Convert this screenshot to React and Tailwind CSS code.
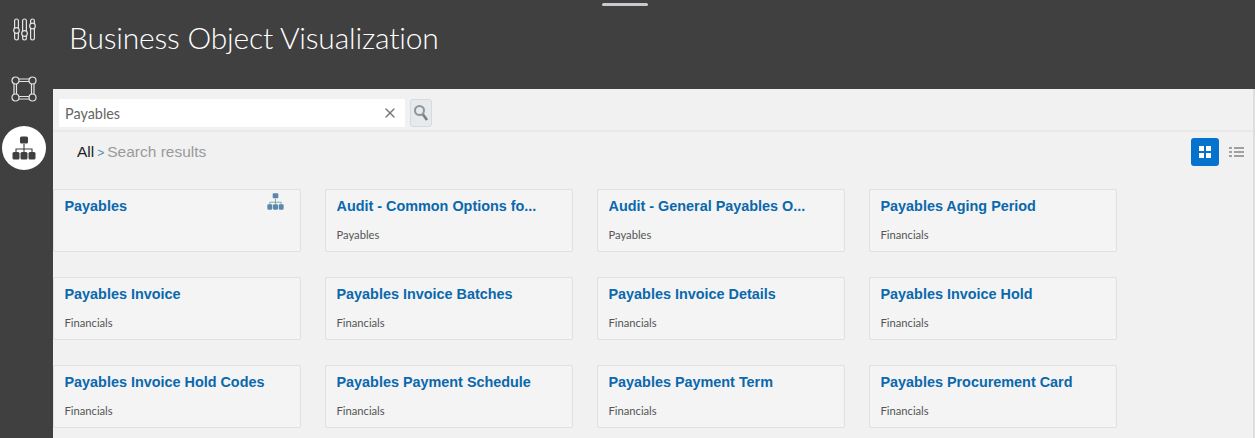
import { X } from 'lucide-react';

const cards = [
    { title: 'Payables', sub: '', tree: true },
    { title: 'Audit - Common Options fo...', sub: 'Payables' },
    { title: 'Audit - General Payables O...', sub: 'Payables' },
    { title: 'Payables Aging Period', sub: 'Financials' },
    { title: 'Payables Invoice', sub: 'Financials' },
    { title: 'Payables Invoice Batches', sub: 'Financials' },
    { title: 'Payables Invoice Details', sub: 'Financials' },
    { title: 'Payables Invoice Hold', sub: 'Financials' },
    { title: 'Payables Invoice Hold Codes', sub: 'Financials' },
    { title: 'Payables Payment Schedule', sub: 'Financials' },
    { title: 'Payables Payment Term', sub: 'Financials' },
    { title: 'Payables Procurement Card', sub: 'Financials' },
];

const SlidersIcon = () => (
    <svg width="23" height="23" viewBox="0 0 23 23" fill="none" stroke="#e4e4e4" strokeWidth="1.200">
        <rect x="1.600" y="1" width="3.800" height="21" rx="1.900" />
        <rect x="9.600" y="1" width="3.800" height="21" rx="1.900" />
        <rect x="17.600" y="1" width="3.800" height="21" rx="1.900" />
        <circle cx="3.500" cy="12.500" r="2.800" fill="#404040" />
        <circle cx="11.500" cy="15.500" r="2.800" fill="#404040" />
        <circle cx="19.500" cy="8" r="2.800" fill="#404040" />
    </svg>
);

const GraphIcon = () => (
    <svg width="26" height="26" viewBox="0 0 26 26" fill="none" stroke="#e4e4e4" strokeWidth="1.200">
        <path d="M7.500 3h11M7.500 5.500h11M7.500 20.500h11M7.500 23h11M3 7.500v11M5.500 7.500v11M20.500 7.500v11M23 7.500v11" />
        <circle cx="4.500" cy="4.500" r="3.500" fill="#404040" />
        <circle cx="21.500" cy="4.500" r="3.500" fill="#404040" />
        <circle cx="4.500" cy="21.500" r="3.500" fill="#404040" />
        <circle cx="21.500" cy="21.500" r="3.500" fill="#404040" />
    </svg>
);

const TreeIcon = ({ size, box, line }) => (
    <svg width={size} height={size} viewBox="0 0 24 24">
        <path d="M12 8v8M4 16v-3h16v3" fill="none" stroke={line} strokeWidth="1.100" />
        <rect x="8" y="0.500" width="8" height="7" rx="1.500" fill={box} />
        <rect x="0.500" y="16" width="7" height="7.500" rx="1.500" fill={box} />
        <rect x="8.500" y="16" width="7" height="7.500" rx="1.500" fill={box} />
        <rect x="16.500" y="16" width="7" height="7.500" rx="1.500" fill={box} />
    </svg>
);

const Card = ({ title, sub, tree }) => (
    <div className="relative h-[63px] w-[248px] rounded-[2px] border border-[#e0e0e0] bg-[#f4f4f4] pl-[10.500px] pt-[7px]">
        <div className="truncate text-[14.400px] font-bold leading-[18px] text-[#0a68ad]" style={{ fontFamily: '"Liberation Sans", sans-serif' }}>
            {title}
        </div>
        <div className="mt-[13px] text-[11.200px] leading-[14px] text-[#555555]">{sub}</div>
        {tree && (
            <div className="absolute right-[16px] top-[3px]">
                <TreeIcon size={17} box="#5b86ad" line="#5f9e92" />
            </div>
        )}
    </div>
);

export default function App() {
    return (
        <div className="relative flex h-[438px] w-[1255px] overflow-hidden bg-[#404040]" style={{ fontFamily: 'Lato, sans-serif' }}>
            {/* Top handle */}
            <div className="absolute left-[602px] top-[3px] h-[3px] w-[46px] rounded-full bg-[#c9c9d2]" />

            {/* Side rail */}
            <div className="flex w-[53px] shrink-0 flex-col items-center pt-[18px]">
                <div className="-ml-[5px]"><SlidersIcon /></div>
                <div className="-ml-[5px] mt-[35px]"><GraphIcon /></div>
                <div className="-ml-[5px] mt-[24px] flex h-[44px] w-[44px] items-center justify-center rounded-full bg-white">
                    <TreeIcon size={24} box="#404040" line="#404040" />
                </div>
            </div>

            <div className="flex min-w-0 flex-1 flex-col">
                {/* Title bar */}
                <div className="flex h-[89px] shrink-0 items-start pl-[16px] pt-[16px]">
                    <h1 className="text-[30px] font-light leading-[42px] tracking-[-0.2px] text-white">Business Object Visualization</h1>
                </div>

                <div className="flex-1 border-r-2 border-[#dddddd] bg-[#f1f1f1]">
                    {/* Search */}
                    <div className="flex h-[43px] items-end gap-[5px] border-b-2 border-[#e8e8e8] pb-[3px] pl-[6px]">
                        <div className="flex h-[28px] w-[346px] items-center justify-between bg-white pl-[6px] pr-[7px]">
                            <span className="mt-[1px] text-[14.400px] text-[#666666]">Payables</span>
                            <X size={16} className="text-[#777777]" />
                        </div>
                        <div className="flex h-[28px] w-[22px] items-center justify-center rounded-[3px] border border-[#d5dade] bg-[#e6eaec]">
                            <svg width="16" height="18" viewBox="0 0 16 18" fill="none">
                                <circle cx="6.500" cy="6.500" r="4.500" stroke="#8f9498" strokeWidth="2" />
                                <path d="M10 10.500l4 5.500" stroke="#7a7f83" strokeWidth="2.600" />
                            </svg>
                        </div>
                    </div>

                    {/* Breadcrumb and view switch */}
                    <div className="flex h-[57px] items-start justify-between pl-[24px] pr-[9px]" style={{ fontFamily: '"Liberation Sans", sans-serif' }}>
                        <div className="mt-[10px] flex items-baseline text-[15.500px] leading-[20px]">
                            <span className="text-[#222222]">All</span>
                            <span className="mx-[3px] text-[12px] text-[#4f8fb5]">&gt;</span>
                            <span className="text-[#9a9a9a]">Search results</span>
                        </div>
                        <div className="mt-[6px] flex items-center gap-[10px]">
                            <div className="flex h-[28px] w-[28px] items-center justify-center rounded-[3px] bg-[#0572ce]">
                                <div className="grid grid-cols-2 gap-[2px]">
                                    <div className="h-[5px] w-[5px] bg-white" />
                                    <div className="h-[5px] w-[5px] bg-white" />
                                    <div className="h-[5px] w-[5px] bg-white" />
                                    <div className="h-[5px] w-[5px] bg-white" />
                                </div>
                            </div>
                            <svg width="15" height="10" viewBox="0 0 15 10" fill="#a0a0a0">
                                <rect x="0" y="0" width="3" height="2" />
                                <rect x="5" y="0" width="10" height="2" />
                                <rect x="0" y="4" width="3" height="2" />
                                <rect x="5" y="4" width="10" height="2" />
                                <rect x="0" y="8" width="3" height="2" />
                                <rect x="5" y="8" width="10" height="2" />
                            </svg>
                        </div>
                    </div>

                    {/* Results */}
                    <div className="grid grid-cols-[repeat(4,248px)] gap-x-[24px] gap-y-[25px]">
                        {cards.map(card => (
                            <Card key={card.title} {...card} />
                        ))}
                    </div>
                </div>
            </div>
        </div>
    );
}
